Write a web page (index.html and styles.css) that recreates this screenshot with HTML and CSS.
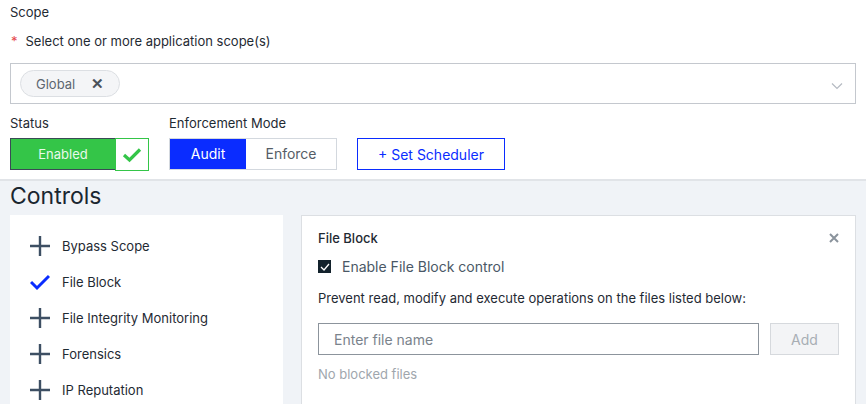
FILE: index.html
```html
<!DOCTYPE html>
<html lang="en">
<head>
  <meta charset="UTF-8" />
  <title>Policy</title>
  <link rel="stylesheet" href="styles.css">
</head>
<body>
  <section class="top">
    <div class="label">Scope</div>
    <div class="label required"><span class="star">*</span>Select one or more application scope(s)</div>

    <div class="select">
      <span class="chip">Global <span class="chip-x">&#x2715;</span></span>
      <svg class="chevron" width="12" height="8" viewBox="0 0 12 8"><path d="M1 1.5 L6 6.5 L11 1.5" fill="none" stroke="#b5bac2" stroke-width="1.2"/></svg>
    </div>

    <div class="options">
      <div class="group">
        <div class="label">Status</div>
        <div class="status">
          <span class="status-btn">Enabled</span>
          <span class="status-check">
            <svg width="20" height="16" viewBox="0 0 20 16"><path d="M2 8 L7.5 13 L18 2.5" fill="none" stroke="#34c548" stroke-width="3.2"/></svg>
          </span>
        </div>
      </div>
      <div class="group">
        <div class="label">Enforcement Mode</div>
        <div class="toggle">
          <span class="toggle-btn active">Audit</span>
          <span class="toggle-btn">Enforce</span>
        </div>
      </div>
      <div class="group">
        <div class="label">&nbsp;</div>
        <button class="scheduler">+ Set Scheduler</button>
      </div>
    </div>
  </section>

  <section class="controls">
    <h2>Controls</h2>
    <div class="controls-body">
      <ul class="control-list">
        <li><svg class="ic" width="20" height="20" viewBox="0 0 20 20"><path d="M10 0 V20 M0 10 H20" stroke="#3d4f63" stroke-width="2.4"/></svg>Bypass Scope</li>
        <li><svg class="ic" width="20" height="20" viewBox="0 0 20 20"><path d="M1 10 L7 16 L19 4" fill="none" stroke="#0a2cff" stroke-width="3"/></svg>File Block</li>
        <li><svg class="ic" width="20" height="20" viewBox="0 0 20 20"><path d="M10 0 V20 M0 10 H20" stroke="#3d4f63" stroke-width="2.4"/></svg>File Integrity Monitoring</li>
        <li><svg class="ic" width="20" height="20" viewBox="0 0 20 20"><path d="M10 0 V20 M0 10 H20" stroke="#3d4f63" stroke-width="2.4"/></svg>Forensics</li>
        <li><svg class="ic" width="20" height="20" viewBox="0 0 20 20"><path d="M10 0 V20 M0 10 H20" stroke="#3d4f63" stroke-width="2.4"/></svg>IP Reputation</li>
      </ul>

      <div class="detail">
        <div class="detail-head">
          <span class="detail-title">File Block</span>
          <svg class="close" width="10" height="10" viewBox="0 0 10 10"><path d="M1 1 L9 9 M9 1 L1 9" stroke="#8a939c" stroke-width="2"/></svg>
        </div>
        <label class="check-row">
          <span class="checkbox"><svg width="10" height="8" viewBox="0 0 10 8"><path d="M1 4 L4 7 L9 1" fill="none" stroke="#fff" stroke-width="1.3"/></svg></span>
          Enable File Block control
        </label>
        <p class="hint">Prevent read, modify and execute operations on the files listed below:</p>
        <div class="add-row">
          <input class="file-input" type="text" placeholder="Enter file name">
          <button class="add-btn">Add</button>
        </div>
        <p class="empty">No blocked files</p>
      </div>
    </div>
  </section>
</body>
</html>
```

FILE: styles.css
```css
* {
  margin: 0;
  padding: 0;
  box-sizing: border-box;
}

body {
  font-family: 'Inter', sans-serif;
  font-size: 13px;
  color: #1f2a33;
  background: #f0f3f7;
  height: 404px;
  overflow: hidden;
}

.top {
  background: #fff;
  padding: 4px 10px 8px;
  border-bottom: 2px solid #e1e4e8;
}

.label {
  font-size: 13px;
  line-height: 16px;
  color: #1f2a33;
}

.required {
  margin-top: 13px;
}

.star {
  color: #e5484d;
  margin: 0 8px 0 1px;
}

.select {
  display: flex;
  align-items: center;
  justify-content: space-between;
  height: 41px;
  margin-top: 14px;
  padding: 0 12px 0 9px;
  border: 1px solid #c4c8ce;
}

.chip {
  display: inline-flex;
  align-items: center;
  height: 27px;
  padding: 0 15px;
  border: 1px solid #dcdfe3;
  border-radius: 14px;
  background: #f4f5f7;
  color: #5c6670;
}

.chip-x {
  margin-left: 16px;
  font-size: 15px;
  font-weight: 700;
  color: #4a525a;
}

.chevron {
  margin-top: 4px;
}

.options {
  display: flex;
  gap: 20px;
  margin-top: 11px;
}

.group .label {
  margin-bottom: 7px;
}

.status {
  display: flex;
}

.status-btn {
  width: 105px;
  height: 32px;
  line-height: 30px;
  text-align: center;
  background: #34c548;
  color: #e8f9ea;
  border: 1px solid #3a4a55;
  border-right: none;
  font-size: 13px;
}

.status-check {
  display: flex;
  align-items: center;
  justify-content: center;
  width: 34px;
  height: 33px;
  border: 1px solid #34c548;
  background: #fff;
}

.toggle {
  display: flex;
  border: 1px solid #d3d8de;
}

.toggle-btn {
  height: 30px;
  line-height: 30px;
  font-size: 14px;
  text-align: center;
  color: #555d66;
  width: 90px;
}

.toggle-btn.active {
  width: 76px;
  background: #0a2cff;
  color: #fff;
}

.scheduler {
  width: 148px;
  height: 32px;
  background: #fff;
  border: 1px solid #0a2cff;
  color: #0a2cff;
  font-family: 'Inter', sans-serif;
  font-size: 14px;
}

.controls {
  padding: 1px 10px 0;
}

.controls h2 {
  font-size: 23px;
  font-weight: 400;
  line-height: 28px;
  color: #1a2630;
}

.controls-body {
  display: flex;
  align-items: flex-start;
  gap: 18px;
  margin-top: 5px;
}

.control-list {
  list-style: none;
  width: 275px;
  height: 200px;
  background: #fff;
  padding: 13px 0 0 20px;
}

.control-list li {
  display: flex;
  align-items: center;
  height: 36px;
  font-size: 13px;
  color: #1f2a33;
}

.ic {
  margin-right: 12px;
}

.detail {
  flex: 1;
  height: 200px;
  background: #fff;
  border: 1px solid #dcdfe3;
  padding: 15px 16px 0;
}

.detail-head {
  display: flex;
  justify-content: space-between;
  align-items: center;
  height: 14px;
}

.detail-title {
  font-weight: 500;
  font-size: 13px;
}

.check-row {
  display: flex;
  align-items: center;
  margin-top: 13px;
  font-size: 14px;
  color: #4a5866;
}

.checkbox {
  display: inline-flex;
  align-items: center;
  justify-content: center;
  width: 13px;
  height: 13px;
  margin-right: 11px;
  background: #13222c;
}

.hint {
  margin-top: 15px;
  font-size: 13px;
  color: #1f2a33;
}

.add-row {
  display: flex;
  gap: 11px;
  margin-top: 17px;
}

.file-input {
  width: 441px;
  height: 32px;
  border: 1px solid #8c949c;
  padding: 0 15px;
  font-family: 'Inter', sans-serif;
  font-size: 14px;
}

.file-input::placeholder {
  color: #7a838c;
}

.add-btn {
  width: 69px;
  height: 32px;
  background: #f3f4f6;
  border: 1px solid #d6d9dd;
  color: #a8aeb4;
  font-family: 'Inter', sans-serif;
  font-size: 14px;
}

.empty {
  margin-top: 11px;
  font-size: 13px;
  color: #a0a6ad;
}
```
